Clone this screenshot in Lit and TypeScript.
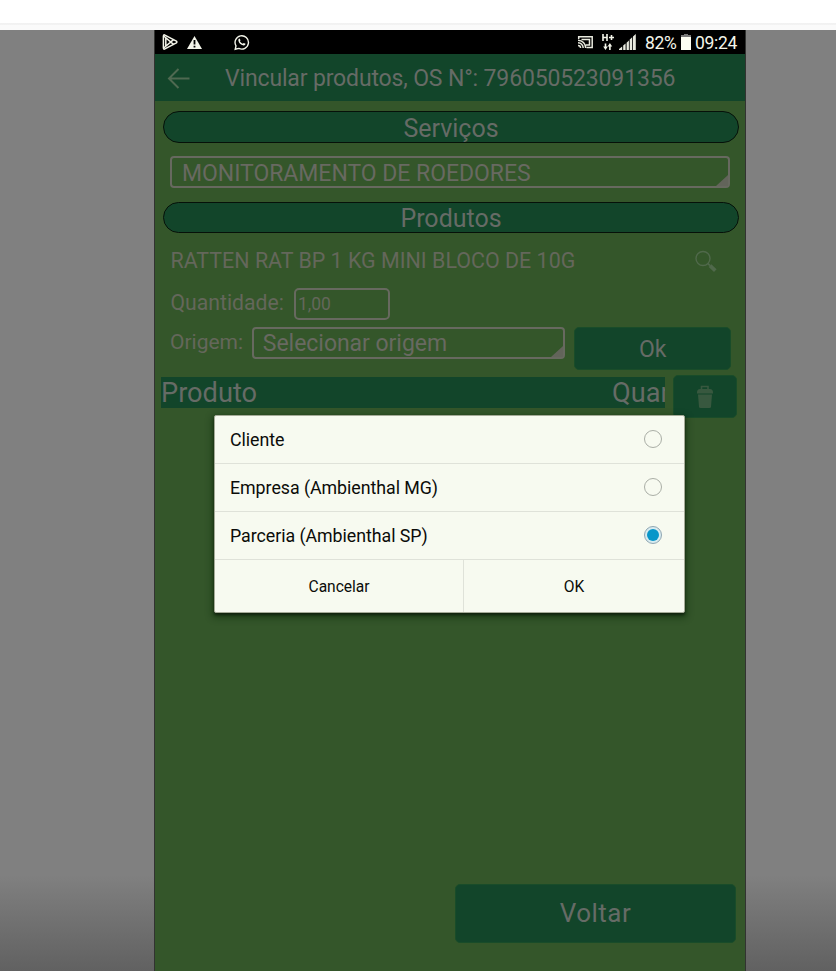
import { LitElement, html, css } from "lit";
import { customElement, property, state } from "lit/decorators.js";
import { classMap } from "lit/directives/class-map.js";

@customElement("status-bar")
class StatusBar extends LitElement {
  static styles = css`
    :host { display: flex; height: 24px; background: #000; color: #f4f5ea; align-items: center; font: 17.5px/24px Roboto, sans-serif; }
    svg { display: block; flex: none; }
    .play { margin-left: 7px; }
    .warn { margin-left: 8px; }
    .chat { margin-left: 32px; }
    .cast { margin-left: auto; }
    .net { margin-left: 7px; }
    .signal { margin-left: 4px; }
    .pct, .time { padding-top: 2px; letter-spacing: -0.3px; white-space: nowrap; }
    .pct { margin-left: 9px; width: 33px; }
    .battery { margin-left: 3px; }
    .time { margin-left: 4px; width: 50px; }
  `;
  render() {
    return html`
      <svg class="play" width="17" height="18" viewBox="0 0 17 18" fill="none" stroke="#f4f5ea" stroke-width="1.5" stroke-linejoin="round">
        <path d="M2.4 1.8 14.4 8.2Q15.4 9 14.4 9.8L2.4 16.2Q1.4 16.2 1.4 15V3Q1.4 1.8 2.4 1.8Z"/><path d="M2 3.2 11.8 11.6M2 14.8 11.8 6.4M3.8 4.2V13.8"/>
      </svg>
      <svg class="warn" width="15" height="18" viewBox="0 0 15 18"><path fill="#f4f5ea" d="M7.5 3 15 16H0Z"/><path stroke="#000" stroke-width="1.8" d="M7.5 7v4.6M7.5 12.8v1.6"/></svg>
      <svg class="chat" width="16" height="18" viewBox="0 0 16 18">
        <path d="M1.2 16.3 2 12.8A6.7 6.7 0 1 1 4.8 15.4Z" fill="none" stroke="#f4f5ea" stroke-width="1.4"/>
        <path fill="#f4f5ea" d="M5.6 5.4 6.5 7.3 5.9 8.3Q6.9 10 8.8 10.8L9.7 9.9 11.6 10.8Q11.3 12.5 9.6 12.4 5 11.6 4.3 7.2 4.3 5.5 5.6 5.4Z"/>
      </svg>
      <svg class="cast" width="16" height="16" viewBox="0 0 16 16" fill="none" stroke="#e9eadf" stroke-width="1.5">
        <path d="M1.7 5V2.7H15.2V13.4H9.5M4.5 5.4H12.5V11H9"/><path d="M1 6.2A7.7 7.7 0 0 1 8.7 14M1 8.8A5.2 5.2 0 0 1 6.2 14M1 11.4A2.6 2.6 0 0 1 3.6 14"/>
      </svg>
      <svg class="net" width="15" height="20" viewBox="0 0 15 20">
        <path d="M3 2v7M7 2v7M3 5.5h4M9 5.5h5M11.5 3v5" fill="none" stroke="#f4f5ea" stroke-width="1.6"/>
        <path d="M5.5 11.5v4M9.9 13v5" stroke="#f4f5ea" stroke-width="1.6"/><path fill="#f4f5ea" d="M3.2 14.6h4.6L5.5 18ZM7.6 14.4h4.6L9.9 11Z"/>
      </svg>
      <svg class="signal" width="17" height="18" viewBox="0 0 17 18" fill="#e9eadf">
        <path d="M0 17V16L3.2 13.5V17ZM4.2 17V12.5L6.6 10.4V17ZM7.6 17V9.7L9.9 7.4V17ZM10.7 17V6.6L13.2 4.2V17ZM14 17V3.4L16.8 1V17Z"/>
      </svg>
      <span class="pct">82%</span>
      <svg class="battery" width="10" height="16" viewBox="0 0 10 16"><path fill="#777" d="M3 0h4v1h3v2H0V1h3Z"/><path fill="#fdfef3" d="M0 3h10v13H0z"/></svg>
      <span class="time">09:24</span>
    `;
  }
}

@customElement("spinner-field")
class SpinnerField extends LitElement {
  @property() value = "";
  static styles = css`
    :host { display: block; box-sizing: border-box; border: 2px solid #67695f; border-radius: 4px; position: relative; color: #686961; font: 23px/30px Roboto, sans-serif; white-space: nowrap; }
    .value { padding-left: var(--inset, 10px); line-height: var(--value-line, 31px); letter-spacing: -.04px; height: 28px; }
    .corner { position: absolute; right: 0; bottom: 0; display: block; }
  `;
  render() {
    return html`<div class="value">${this.value}</div>
      <svg class="corner" width="12" height="11"><path d="M12 0V11H0Z" fill="#62645a"/></svg>`;
  }
}

@customElement("origin-dialog")
class OriginDialog extends LitElement {
  @state() selected = 2;
  options = ["Cliente", "Empresa (Ambienthal MG)", "Parceria (Ambienthal SP)"];
  static styles = css`
    :host { display: block; box-sizing: border-box; width: 471px; height: 198px; background: #f7faf0; border: 1px solid #a5ab98; border-radius: 2px; color: #0b0c09; font: 17.8px/47px Roboto, sans-serif;
      box-shadow: 0 2px 3px rgba(0,0,0,.5), 0 3px 7px 2px rgba(0,35,0,.42); }
    .row { box-sizing: border-box; display: flex; height: 48px; border-bottom: 1px solid #dfe2d9; justify-content: space-between; align-items: center; padding: 0 22px 1px 15px; white-space: nowrap; cursor: pointer; }
    .radio { box-sizing: border-box; width: 18px; height: 18px; border: 1px solid #aaaea6; border-radius: 50%; display: grid; place-items: center; }
    .radio.on { border-color: #91a7b3; background: #d7ebf0; }
    .dot { width: 12px; height: 12px; border-radius: 50%; background: #0796c9; }
    .label { line-height: 46px; letter-spacing: -.04px; padding-top: 2px; }
    .actions { display: flex; height: 52px; font-size: 15.6px; line-height: 54px; text-align: center; letter-spacing: -.05px; }
    .cancel { width: 248px; border-right: 1px solid #dfe2d9; }
    .ok { flex: 1; }
  `;
  render() {
    return html`
      ${this.options.map((o, i) => html`<div class="row" @click=${() => (this.selected = i)}>
        <span class="label">${o}</span>
        <span class=${classMap({ radio: true, on: i === this.selected })}>${i === this.selected ? html`<span class="dot"></span>` : ""}</span>
      </div>`)}
      <div class="actions"><div class="cancel">Cancelar</div><div class="ok">OK</div></div>`;
  }
}

@customElement("app-root")
class AppRoot extends LitElement {
  static styles = css`
    :host { display: flex; flex-direction: column; height: 971px; width: 836px; overflow: hidden; background: #fff; font-family: Roboto, sans-serif; color: #666b66; }
    * { box-sizing: border-box; }
    svg { display: block; }
    .top { height: 30px; flex: none; background: linear-gradient(#fff 23px, #f1f1f1 23px, #f3f3f3 25px, #fafafa 25px); }
    .stage { flex: 1; background: linear-gradient(#808080 845px, #616161 941px); display: flex; padding-left: 154px; }
    .phone { width: 592px; border: solid #323331; border-width: 0 1px; background: #34562a; position: relative; display: flex; flex-direction: column; }
    .appbar { height: 47px; flex: none; background: #12452a; display: flex; align-items: center; font-size: 23px; padding-left: 12px; white-space: nowrap; }
    .arrow { margin-right: 35px; }
    .title { letter-spacing: -.15px; line-height: 28px; padding-top: 2px; }
    .pill { margin: 10px 6px 0 8px; height: 32px; flex: none; border: 1px solid #061109; border-radius: 16px; background: #12452a; text-align: center; font-size: 25px; line-height: 34px; }
    .service { margin: 13px 15px 0 15px; height: 32px; flex: none; }
    .second { margin-top: 14px; height: 31px; line-height: 32px; }
    .product { display: flex; margin: 14px 28px 0 15.5px; height: 26px; flex: none; justify-content: space-between; font-size: 21.45px; line-height: 28px; white-space: nowrap; color: #64675b; }
    .search { margin-top: 3px; }
    .qty { display: flex; margin: 15px 0 0 15.5px; height: 32px; flex: none; font-size: 21.2px; line-height: 29px; color: #64675b; }
    .qlabel { width: 123.5px; }
    .box { width: 96px; height: 32px; border: 2px solid #67695f; border-radius: 5px; font-size: 17.5px; line-height: 28px; padding-left: 2px; }
    .origin { display: flex; margin: 7px 14px 0 15px; height: 44px; flex: none; font-size: 21px; color: #64675b; }
    .olabel { width: 82px; line-height: 30px; }
    .select { width: 314px; height: 32px; --value-line: 29px; --inset: 9px; }
    .btn { background: #12452a; border: 1px solid #194c29; border-radius: 5px; text-align: center; color: #666b66; }
    .okbtn { margin-left: 9px; width: 157px; height: 43px; font-size: 23px; line-height: 44px; }
    .table { display: flex; margin: 4px 8px 0 6px; height: 43px; flex: none; }
    .head { margin-top: 2px; width: 505px; height: 31px; background: #12452a; overflow: hidden; display: flex; font-size: 27.2px; line-height: 33px; white-space: nowrap; }
    .c1 { width: 451px; flex: none; }
    .c2 { flex: none; }
    .trash { margin-left: 8px; width: 64px; height: 43px; display: grid; place-items: center; }
    .back { margin: auto 9px 28px auto; width: 281px; height: 59px; font-size: 26px; line-height: 57px; letter-spacing: .5px; }
    .dialog { position: absolute; left: 59px; top: 385px; }
  `;
  render() {
    return html`
      <div class="top"></div>
      <div class="stage"><div class="phone">
        <status-bar></status-bar>
        <div class="appbar">
          <svg class="arrow" width="23" height="22" viewBox="0 0 23 22" fill="none" stroke="#4f6951" stroke-width="2"><path d="M22.5 11.5H1.5M11.5 2 2 11.5 11.5 21"/></svg>
          <span class="title">Vincular produtos, OS N°: 796050523091356</span>
        </div>
        <div class="pill">Serviços</div>
        <spinner-field class="service" value="MONITORAMENTO DE ROEDORES"></spinner-field>
        <div class="pill second">Produtos</div>
        <div class="product"><span>RATTEN RAT BP 1 KG MINI BLOCO DE 10G</span>
          <svg class="search" width="22" height="23" viewBox="0 0 22 23" fill="none" stroke="#50694b"><circle cx="8" cy="8.5" r="7" stroke-width="1.4"/><path d="M12.8 13.4 15 15.6" stroke-width="1.6"/><path d="M15 15.6 20.3 20.6" stroke-width="3.8"/></svg>
        </div>
        <div class="qty"><span class="qlabel">Quantidade:</span><div class="box">1,00</div></div>
        <div class="origin"><span class="olabel">Origem:</span><spinner-field class="select" value="Selecionar origem"></spinner-field><div class="btn okbtn">Ok</div></div>
        <div class="table">
          <div class="head"><span class="c1">Produto</span><span class="c2">Quantidade</span></div>
          <div class="btn trash"><svg width="18" height="24" viewBox="0 0 18 24"><path d="M5.5 4V1.5H12V4" fill="none" stroke="#38583f" stroke-width="1.6"/><path fill="#38583f" d="M1 7.5Q1 4 4 4H14Q17 4 17 7.5V8.5H1ZM2 9.5H16L15 22Q14.8 23 13.5 23H4.5Q3.2 23 3 22Z"/></svg></div>
        </div>
        <div class="btn back">Voltar</div>
        <origin-dialog class="dialog"></origin-dialog>
      </div></div>`;
  }
}
